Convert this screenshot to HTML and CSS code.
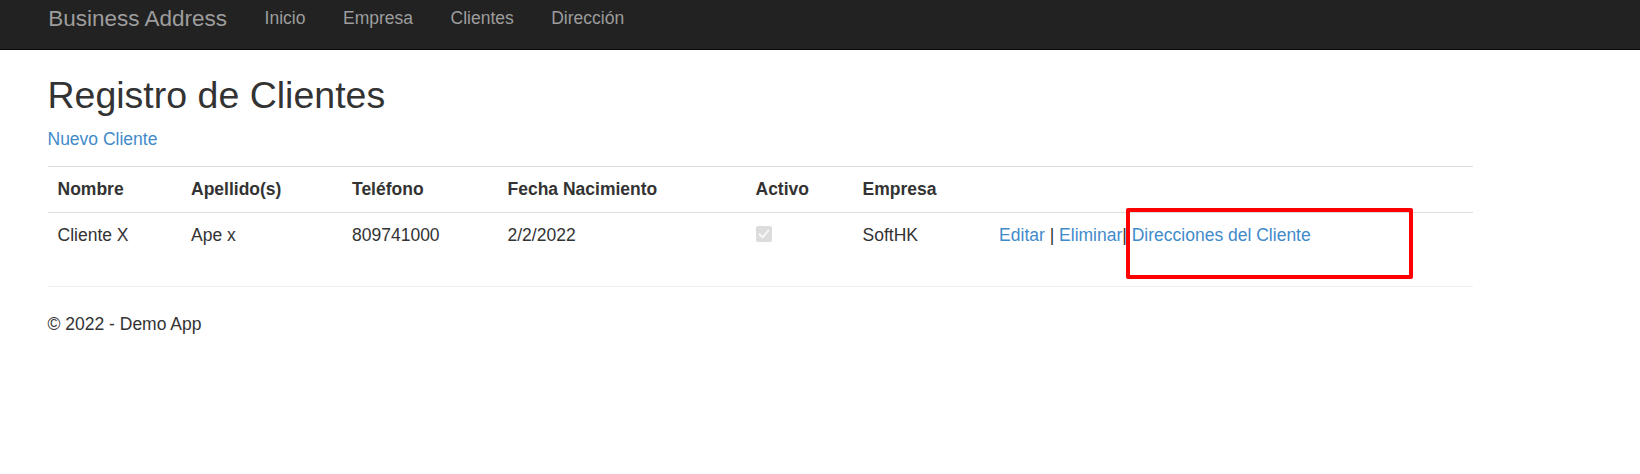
FILE: index.html
```html
<!DOCTYPE html>
<html lang="es">
<head>
<meta charset="utf-8">
<title>Registro de Clientes - Business Address</title>
<link rel="stylesheet" href="styles.css">
</head>
<body>
<nav class="navbar">
  <a class="brand" href="#">Business Address</a>
  <ul class="nav">
    <li><a href="#">Inicio</a></li>
    <li><a href="#">Empresa</a></li>
    <li><a href="#">Clientes</a></li>
    <li><a href="#">Dirección</a></li>
  </ul>
</nav>
<main class="body-content">
  <h2 class="title">Registro de Clientes</h2>
  <p class="create"><a href="#">Nuevo Cliente</a></p>
  <div class="table-wrap">
    <table class="table">
      <colgroup>
        <col class="c-nombre">
        <col class="c-apellido">
        <col class="c-telefono">
        <col class="c-fecha">
        <col class="c-activo">
        <col class="c-empresa">
        <col class="c-acciones">
      </colgroup>
      <tr>
        <th>Nombre</th>
        <th>Apellido(s)</th>
        <th>Teléfono</th>
        <th>Fecha Nacimiento</th>
        <th>Activo</th>
        <th>Empresa</th>
        <th></th>
      </tr>
      <tr>
        <td>Cliente X</td>
        <td>Ape x</td>
        <td>809741000</td>
        <td>2/2/2022</td>
        <td><span class="checkbox" role="checkbox" aria-checked="true" aria-disabled="true"><svg width="16" height="16" viewBox="0 0 16 16"><path d="M3.6 8.3 L6.6 11.3 L12.4 4.6" fill="none" stroke="#f7f7f7" stroke-width="2" stroke-linecap="round" stroke-linejoin="round"/></svg></span></td>
        <td>SoftHK</td>
        <td><a href="#">Editar</a> | <a href="#">Eliminar</a>| <a href="#">Direcciones del Cliente</a></td>
      </tr>
    </table>
    <div class="annotation"></div>
  </div>
  <hr class="sep">
  <footer class="footer">
    <p>© 2022 - Demo App</p>
  </footer>
</main>
</body>
</html>
```

FILE: styles.css
```css
html, body {
  margin: 0;
  padding: 0;
  background: #fff;
}

body {
  font-family: "Liberation Sans", Arial, Helvetica, sans-serif;
  font-size: 17.5px;
  line-height: 25px;
  color: #333;
}

a {
  color: #428bca;
  text-decoration: none;
}

/* Navbar */
.navbar {
  display: flex;
  align-items: flex-start;
  box-sizing: border-box;
  height: 50px;
  padding: 5.5px 0 0 29.5px;
  background: #222;
  border-bottom: 1px solid #080808;
}

.brand {
  padding: 0 18.75px;
  font-size: 22.5px;
  line-height: 25px;
  color: #9d9d9d;
}

.nav {
  display: flex;
  margin: 0;
  padding: 0;
  list-style: none;
}

.nav a {
  display: block;
  padding: 0 18.75px;
  font-size: 17.5px;
  line-height: 25px;
  color: #9d9d9d;
}

/* Content */
.body-content {
  width: 1425px;
  padding-left: 47.5px;
}

.title {
  margin: 25px 0 0;
  font-size: 37.5px;
  line-height: 41.25px;
  font-weight: 500;
  color: #333;
}

.create {
  margin: 11px 0 13.5px;
}

.table-wrap {
  position: relative;
}

.table {
  width: 1425px;
  table-layout: fixed;
  border-collapse: collapse;
  border-spacing: 0;
  margin-bottom: 28.25px;
}

.c-nombre { width: 133.5px; }
.c-apellido { width: 161px; }
.c-telefono { width: 155.5px; }
.c-fecha { width: 248px; }
.c-activo { width: 107px; }
.c-empresa { width: 136.6px; }
.c-acciones { width: auto; }

.table th,
.table td {
  padding: 10px;
  text-align: left;
  vertical-align: top;
  line-height: 25px;
  border-top: 1px solid #ddd;
  white-space: nowrap;
}

.table th {
  font-weight: bold;
}

.checkbox {
  display: inline-block;
  width: 16px;
  height: 16px;
  border-radius: 2px;
  background: #dcdcdc;
  vertical-align: -1px;
}

.checkbox svg {
  display: block;
}

.annotation {
  position: absolute;
  left: 1078.5px;
  top: 42.5px;
  width: 287px;
  height: 71px;
  box-sizing: border-box;
  border: 4px solid #ff0000;
  border-radius: 2px;
}

.sep {
  height: 0;
  margin: 0 0 25px;
  border: 0;
  border-top: 1px solid #eee;
}

.footer p {
  margin: 0 0 12.5px;
}
```
